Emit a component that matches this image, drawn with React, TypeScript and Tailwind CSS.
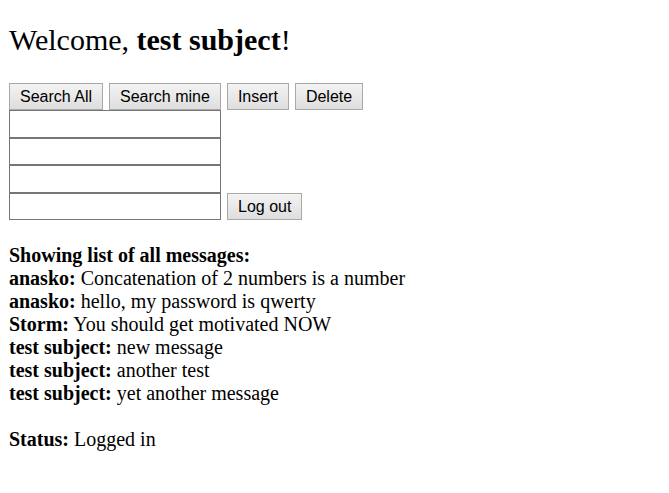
export default function App() {
  const messages = [
    ["anasko", "Concatenation of 2 numbers is a number"],
    ["anasko", "hello, my password is qwerty"],
    ["Storm", "You should get motivated NOW"],
    ["test subject", "new message"],
    ["test subject", "another test"],
    ["test subject", "yet another message"],
  ];

  const btn =
    "h-[27px] border border-[#a9a9a9] bg-linear-to-b from-[#f3f3f3] to-[#dedede] px-[10px] text-[16px] leading-[18px] text-black font-['Liberation_Sans',Arial,sans-serif]";
  const input = "block h-[27.5px] w-[212px] border border-[#767676] bg-white";

  return (
    <div className="min-h-screen bg-white px-[9px] text-black font-['Liberation_Serif','Times_New_Roman',serif]">
      {/* heading */}
      <h1 className="pt-[23px] text-[30px] leading-[34.5px]">
        Welcome, <b>test subject</b>!
      </h1>

      {/* controls */}
      <div className="mt-[25.5px] flex gap-[6px]">
        <button className={btn}>Search All</button>
        <button className={btn}>Search mine</button>
        <button className={btn}>Insert</button>
        <button className={btn}>Delete</button>
      </div>
      <div className="flex flex-col">
        <input className={input} />
        <input className={input} />
        <input className={input} />
        <div className="flex items-end gap-[6px]">
          <input className={input} />
          <button className={btn}>Log out</button>
        </div>
      </div>

      {/* messages */}
      <div className="mt-[24px] text-[20px] leading-[23px]">
        <b>Showing list of all messages:</b>
        {messages.map(([who, text], i) => (
          <div key={i}>
            <b>{who}:</b> {text}
          </div>
        ))}
        <div className="h-[23px]" />
        <div>
          <b>Status:</b> Logged in
        </div>
      </div>
    </div>
  );
}
